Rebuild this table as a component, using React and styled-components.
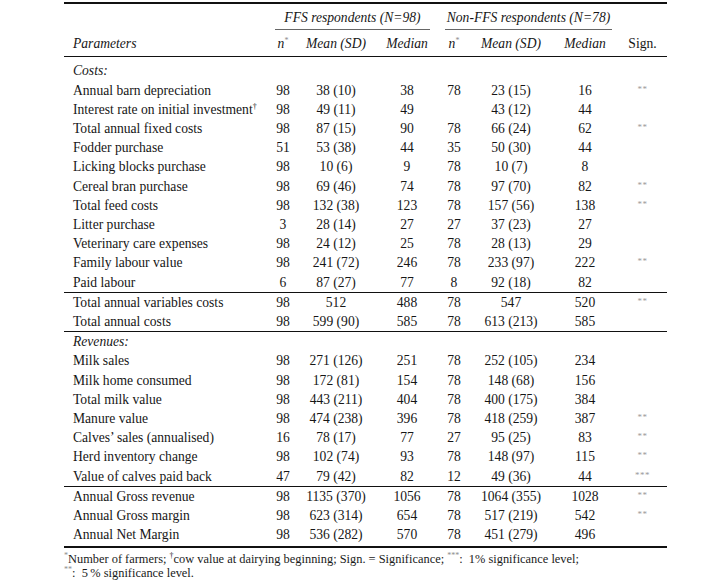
import React from "react";
import styled, { createGlobalStyle } from "styled-components";

const Global = createGlobalStyle`
  html, body { margin: 0; padding: 0; background: #fff; }
  body { font-family: "Liberation Serif", "Times New Roman", serif; color: #161616; }
`;

const Page = styled.div`
  padding: 2px 0 0 64px;
  width: 603px;
  font-family: "Liberation Serif", "Times New Roman", serif;
`;

const Table = styled.table`
  width: 603px;
  table-layout: fixed;
  border-collapse: collapse;
  border-top: 2px solid #111;
  border-bottom: 2px solid #111;
  font-family: "Liberation Serif", "Times New Roman", serif;
  font-size: 13.6px;
  color: #161616;
`;

const GroupTh = styled.th`
  padding: 0;
  font-weight: normal;
  vertical-align: bottom;
`;

const GroupLabel = styled.div`
  font-style: italic;
  line-height: 15px;
  padding: 6px 0 4px;
  margin: ${(p) => p.$margin};
  border-bottom: 1px solid #666;
  text-align: center;
  white-space: nowrap;
`;

const SubTh = styled.th`
  font-weight: normal;
  font-style: ${(p) => (p.$plain ? "normal" : "italic")};
  line-height: 15px;
  padding: 6px 0 5px ${(p) => (p.$left ? "9px" : "0")};
  text-align: ${(p) => (p.$left ? "left" : "center")};
  border-bottom: 1px solid #111;
  white-space: nowrap;
`;

const Row = styled.tr`
  height: 19.2px;
`;

const Cell = styled.td`
  padding: ${(p) => (p.$first ? "4.3px" : "0")} 0 ${(p) => (p.$last ? "2px" : "0")} ${(p) => (p.$left ? "9px" : "0")};
  height: 19.2px;
  line-height: 19.2px;
  text-align: ${(p) => (p.$left ? "left" : "center")};
  font-style: ${(p) => (p.$italic ? "italic" : "normal")};
  border-top: ${(p) => (p.$rule ? "1px solid #111" : "none")};
  white-space: nowrap;
`;

const Sup = styled.sup`
  font-size: 8px;
  vertical-align: 5px;
  line-height: 0;
  color: ${(p) => (p.$grey ? "#8c8c8c" : "inherit")};
  font-style: normal;
`;

const Stars = styled.span`
  font-size: 9px;
  line-height: 0;
  color: #9a9a9a;
  vertical-align: 3px;
  letter-spacing: 0.5px;
`;

const Footnote = styled.div`
  font-size: 12.4px;
  line-height: 14px;
  padding-top: 4px;
  color: #1a1a1a;
`;

const rows = [
  { label: "Costs:", section: true, first: true },
  { label: "Annual barn depreciation", v: ["98", "38 (10)", "38", "78", "23 (15)", "16"], s: "**" },
  { label: "Interest rate on initial investment", dagger: true, v: ["98", "49 (11)", "49", "", "43 (12)", "44"] },
  { label: "Total annual fixed costs", v: ["98", "87 (15)", "90", "78", "66 (24)", "62"], s: "**" },
  { label: "Fodder purchase", v: ["51", "53 (38)", "44", "35", "50 (30)", "44"] },
  { label: "Licking blocks purchase", v: ["98", "10 (6)", "9", "78", "10 (7)", "8"] },
  { label: "Cereal bran purchase", v: ["98", "69 (46)", "74", "78", "97 (70)", "82"], s: "**" },
  { label: "Total feed costs", v: ["98", "132 (38)", "123", "78", "157 (56)", "138"], s: "**" },
  { label: "Litter purchase", v: ["3", "28 (14)", "27", "27", "37 (23)", "27"] },
  { label: "Veterinary care expenses", v: ["98", "24 (12)", "25", "78", "28 (13)", "29"] },
  { label: "Family labour value", v: ["98", "241 (72)", "246", "78", "233 (97)", "222"], s: "**" },
  { label: "Paid labour", v: ["6", "87 (27)", "77", "8", "92 (18)", "82"] },
  { label: "Total annual variables costs", v: ["98", "512", "488", "78", "547", "520"], s: "**", rule: true },
  { label: "Total annual costs", v: ["98", "599 (90)", "585", "78", "613 (213)", "585"] },
  { label: "Revenues:", section: true, rule: true },
  { label: "Milk sales", v: ["98", "271 (126)", "251", "78", "252 (105)", "234"] },
  { label: "Milk home consumed", v: ["98", "172 (81)", "154", "78", "148 (68)", "156"] },
  { label: "Total milk value", v: ["98", "443 (211)", "404", "78", "400 (175)", "384"] },
  { label: "Manure value", v: ["98", "474 (238)", "396", "78", "418 (259)", "387"], s: "**" },
  { label: "Calves\u2019 sales (annualised)", v: ["16", "78 (17)", "77", "27", "95 (25)", "83"], s: "**" },
  { label: "Herd inventory change", v: ["98", "102 (74)", "93", "78", "148 (97)", "115"], s: "**" },
  { label: "Value of calves paid back", v: ["47", "79 (42)", "82", "12", "49 (36)", "44"], s: "***" },
  { label: "Annual Gross revenue", v: ["98", "1135 (370)", "1056", "78", "1064 (355)", "1028"], s: "**", rule: true },
  { label: "Annual Gross margin", v: ["98", "623 (314)", "654", "78", "517 (219)", "542"], s: "**" },
  { label: "Annual Net Margin", v: ["98", "536 (282)", "570", "78", "451 (279)", "496"], last: true },
];

const widths = [206, 26, 80, 62, 32, 82, 66, 49];

function NStar() {
  return (
    <>
      n<Sup $grey>*</Sup>
    </>
  );
}

export default function App() {
  return (
    <Page>
      <Global />
      <Table>
        <colgroup>
          {widths.map((w, i) => (
            <col key={i} style={{ width: w }} />
          ))}
        </colgroup>
        <thead>
          <tr>
            <GroupTh />
            <GroupTh colSpan={3}>
              <GroupLabel $margin="0 8px 0 5px">FFS respondents (N=98)</GroupLabel>
            </GroupTh>
            <GroupTh colSpan={3}>
              <GroupLabel $margin="0 6px 0 7px">Non-FFS respondents (N=78)</GroupLabel>
            </GroupTh>
            <GroupTh />
          </tr>
          <tr>
            <SubTh $left>Parameters</SubTh>
            <SubTh><NStar /></SubTh>
            <SubTh>Mean (SD)</SubTh>
            <SubTh>Median</SubTh>
            <SubTh><NStar /></SubTh>
            <SubTh>Mean (SD)</SubTh>
            <SubTh>Median</SubTh>
            <SubTh $plain>Sign.</SubTh>
          </tr>
        </thead>
        <tbody>
          {rows.map((r, i) => (
            <Row key={i}>
              <Cell $left $italic={r.section} $rule={r.rule} $first={r.first} $last={r.last}>
                {r.label}
                {r.dagger && <Sup>†</Sup>}
              </Cell>
              {(r.v || ["", "", "", "", "", ""]).map((v, j) => (
                <Cell key={j} $rule={r.rule} $first={r.first} $last={r.last}>
                  {v}
                </Cell>
              ))}
              <Cell $rule={r.rule} $first={r.first} $last={r.last}>
                {r.s && <Stars>{r.s}</Stars>}
              </Cell>
            </Row>
          ))}
        </tbody>
      </Table>
      <Footnote>
        <div>
          <Sup $grey>*</Sup>Number of farmers; <Sup>†</Sup>cow value at dairying beginning; Sign. = Significance;{" "}
          <Sup $grey>***</Sup>:&nbsp; 1% significance level;
        </div>
        <div>
          <Sup $grey>**</Sup>:&nbsp; 5&#8201;% significance level.
        </div>
      </Footnote>
    </Page>
  );
}
